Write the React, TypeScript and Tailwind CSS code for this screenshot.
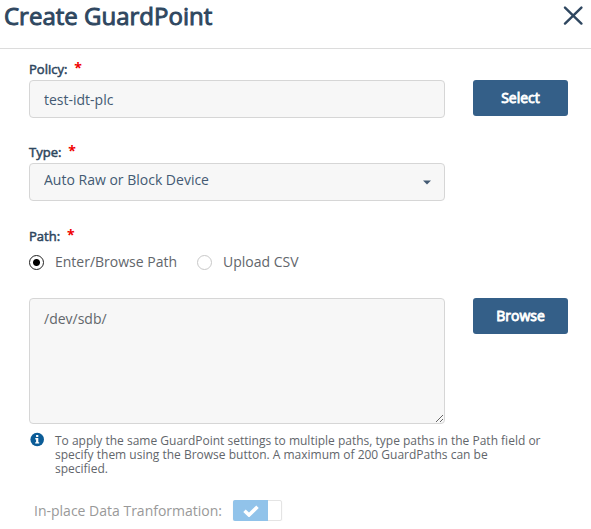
import React from "react";

const fieldStyle =
  "block w-full rounded border border-[#d6d6d6] bg-[#f7f7f7] px-3.5 text-sm outline-none";

function Required() {
  return <span className="relative -top-0.5 text-sm leading-4 font-bold text-[#f00000]">*</span>;
}

function FieldLabel({ text, htmlFor }: { text: string; htmlFor: string }) {
  return (
    <label
      htmlFor={htmlFor}
      className="flex h-[18px] items-center gap-[7px] text-[13px] text-[#2f4760]"
    >
      <span className="[-webkit-text-stroke:0.04em]">{text}</span>
      <Required />
    </label>
  );
}

function ActionButton({ text }: { text: string }) {
  return (
    <button
      type="button"
      className="h-9 w-[95px] shrink-0 rounded-[3px] bg-[#345f88] text-sm text-white [-webkit-text-stroke:0.06em]"
    >
      {text}
    </button>
  );
}

function Radio({ id, text, checked }: { id: string; text: string; checked?: boolean }) {
  return (
    <label htmlFor={id} className="flex items-center gap-[11px]">
      <input
        id={id}
        type="radio"
        name="pathMode"
        defaultChecked={checked}
        className="size-[15px] appearance-none rounded-full border border-[#c8c8c8] bg-white checked:border-[#222] checked:bg-[radial-gradient(circle,#000_3px,#fff_4px)]"
      />
      {text}
    </label>
  );
}

export default class App extends React.Component {
  render() {
    return (
      <main className="bg-white font-['Open_Sans',sans-serif] text-[#62666b]">
        {/* Header */}
        <header className="flex h-[49px] items-start justify-between border-b border-[#dcdcdc] pl-1 pr-2">
          <h1 className="text-2xl leading-8 text-[#2f4760] [-webkit-text-stroke:0.04em]">Create GuardPoint</h1>
          <button type="button" aria-label="Close" className="mt-1.5 text-[#2f4760]">
            <svg width="20" height="20" viewBox="0 0 20 20" fill="none" stroke="currentColor" strokeWidth="2.4" strokeLinecap="round">
              <path d="M2 1.6 18.4 17.6M18.4 1.6 2 17.6" />
            </svg>
          </button>
        </header>

        <form className="pt-3 pr-[23px] pl-[29px]">
          {/* Policy */}
          <div className="flex items-end gap-7">
            <div className="flex-1">
              <FieldLabel text="Policy:" htmlFor="policy" />
              <input
                id="policy"
                type="text"
                defaultValue="test-idt-plc"
                className={`${fieldStyle} mt-px h-[38px] text-[#435a73]`}
              />
            </div>
            <div className="h-[38px]">
              <ActionButton text="Select" />
            </div>
          </div>

          {/* Type */}
          <div className="mt-[26px] mr-[123px]">
            <FieldLabel text="Type:" htmlFor="type" />
            <div className="relative mt-px">
              <select
                id="type"
                className={`${fieldStyle} h-[38px] appearance-none pb-1 text-[#435a73]`}
              >
                <option>Auto Raw or Block Device</option>
              </select>
              <svg className="pointer-events-none absolute top-[17px] right-3.5" width="8" height="5" viewBox="0 0 8 5" fill="#435a73">
                <path d="M0 .5h8L4 4.5z" />
              </svg>
            </div>
          </div>

          {/* Path */}
          <div className="mt-[27px]">
            <FieldLabel text="Path:" htmlFor="path" />
            <div className="mt-1.5 flex h-5 items-center gap-5 text-sm">
              <Radio id="browse" text="Enter/Browse Path" checked />
              <Radio id="upload" text="Upload CSV" />
            </div>
          </div>
          <div className="mt-[26px] flex items-start gap-7">
            <textarea
              id="path"
              defaultValue="/dev/sdb/"
              className={`${fieldStyle} h-[126px] flex-1 resize py-2.5 leading-5`}
            />
            <ActionButton text="Browse" />
          </div>

          {/* Hint */}
          <div className="mt-2.5 flex items-start gap-2.5 pl-px">
            <svg className="-mt-0.5 shrink-0" width="15" height="15" viewBox="0 0 15 15">
              <circle cx="7.2" cy="7.5" r="6.8" fill="#0b5c97" />
              <path d="M6.1 3h2.2v1.9H6.1zM5.3 6h3v4.2h.9v1.4h-4v-1.4h.9V7.4h-.8z" fill="#fff" />
            </svg>
            <p className="max-w-[488px] text-xs leading-[14px]">
              To apply the same GuardPoint settings to multiple paths, type paths in the Path field or
              specify them using the Browse button. A maximum of 200 GuardPaths can be specified.
            </p>
          </div>

          {/* Data transformation switch */}
          <div className="mt-6 flex items-center gap-[11px] pl-[5px] text-sm text-[#999]">
            <label htmlFor="idt">In-place Data Tranformation:</label>
            <div className="relative h-[21px] w-[49px]">
              <input
                id="idt"
                type="checkbox"
                defaultChecked
                disabled
                className="block h-full w-full appearance-none rounded-xs border border-[#e4e4e4] bg-white shadow-xs"
              />
              <span className="pointer-events-none absolute inset-y-0 left-0 flex w-[35px] items-center justify-center rounded-l-xs bg-[#91c3ea]">
                <svg width="16" height="12" viewBox="0 0 16 12" fill="none" stroke="#fff" strokeWidth="3.6">
                  <path d="M1.5 5.8 6 10 14.5 1.8" />
                </svg>
              </span>
            </div>
          </div>
        </form>
      </main>
    );
  }
}
